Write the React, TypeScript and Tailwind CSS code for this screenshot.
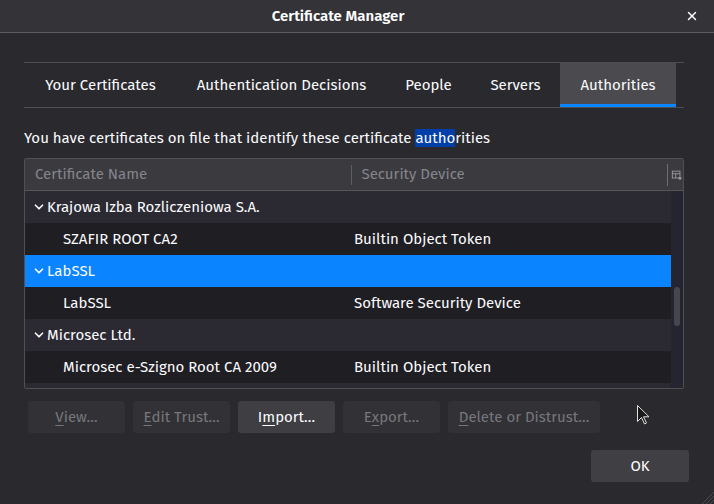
import { ChevronDown, X } from "lucide-react";

const FONT = "font-['Fira_Sans','Noto_Sans','Open_Sans',sans-serif]";

const TABS = [
  { label: "Your Certificates", w: "w-[153px]" },
  { label: "Authentication Decisions", w: "w-[209px]" },
  { label: "People", w: "w-[85px]" },
  { label: "Servers", w: "w-[89px]" },
  { label: "Authorities", w: "w-[116px]", active: true },
];

type Row = { name: string; device?: string; group?: boolean; selected?: boolean };

const ROWS: Row[] = [
  { name: "Krajowa Izba Rozliczeniowa S.A.", group: true },
  { name: "SZAFIR ROOT CA2", device: "Builtin Object Token" },
  { name: "LabSSL", group: true, selected: true },
  { name: "LabSSL", device: "Software Security Device" },
  { name: "Microsec Ltd.", group: true },
  { name: "Microsec e-Szigno Root CA 2009", device: "Builtin Object Token" },
  { name: "", group: true },
];

function TreeRow({ row }: { row: Row }) {
  const bg = row.selected ? "bg-[#0a84ff]" : row.group ? "bg-[#2b2a33]" : "bg-[#1f1e23]";
  return (
    <div className={`flex h-[32px] shrink-0 items-center text-[15px] text-[#fbfbfe] ${bg}`}>
      {row.group ? (
        <div className="flex w-[327px] items-center pl-[7px]">
          {row.name && <ChevronDown className="mr-[1px] h-[14px] w-[14px]" strokeWidth={3} />}
          <span>{row.name}</span>
        </div>
      ) : (
        <div className="w-[327px] pl-[38px]">{row.name}</div>
      )}
      <div className="pl-[2px]">{row.device}</div>
    </div>
  );
}

function Btn({ children, enabled, w }: { children: React.ReactNode; enabled?: boolean; w: string }) {
  return (
    <div
      className={`flex h-[32px] items-center justify-center rounded-[3px] text-[15px] ${w} ${
        enabled ? "bg-[#3e3e43] text-[#fbfbfe]" : "bg-[#313136] text-[#77777d]"
      }`}
    >
      {children}
    </div>
  );
}

export default function App() {
  return (
    <div className={`relative flex h-[504px] w-[714px] flex-col overflow-hidden bg-[#2a2a2e] ${FONT}`}>
      {/* title bar */}
      <div className="relative flex h-[33px] shrink-0 items-center justify-center border-b border-[#5b5b60] bg-[#333338] pr-[38px]">
        <span className="text-[15px] font-semibold text-white">Certificate Manager</span>
        <X className="absolute right-[15px] top-[9px] h-[14px] w-[14px] text-white" strokeWidth={2.5} />
      </div>

      <div className="flex flex-col pl-[24px] pr-[30px]">
        {/* tabs */}
        <div className="mt-[29px] flex h-[46px] border-y border-[#4d4d52]">
          {TABS.map((t) => (
            <div
              key={t.label}
              className={`flex items-center justify-center text-[15px] text-[#fbfbfe] ${t.w} ${
                t.active ? "border-b-[3px] border-[#0a84ff] bg-[#4a4a4f] pt-[3px]" : ""
              }`}
            >
              {t.label}
            </div>
          ))}
        </div>

        <p className="mt-[20px] h-[20px] text-[15px] leading-[20px] text-[#fbfbfe]">
          You have certificates on file that identify these certificate{" "}
          <span className="bg-[#003eaa]">autho</span>rities
        </p>

        {/* tree */}
        <div className="mt-[10px] flex h-[231px] flex-col overflow-hidden rounded-[2px] border border-[#4f4f54]">
          <div className="flex h-[32px] shrink-0 items-center border-b border-[#55555a] bg-[#3a3a3f] text-[15px] text-[#85858c]">
            <div className="w-[326px] pl-[10px]">Certificate Name</div>
            <div className="h-[20px] w-px bg-[#5e5e63]" />
            <div className="w-[316px] pl-[10px]">Security Device</div>
            <div className="h-[22px] w-px bg-[#6e6e73]" />
            <svg viewBox="0 0 14 14" className="ml-[3px] h-[12px] w-[12px]" fill="none" stroke="#a0a0a6" strokeWidth="1">
              <rect x="1.5" y="2.5" width="9" height="8" />
              <path d="M1.5 5.5h9M5.5 5.5v5" />
              <path d="M8 10h5l-2.5 3z" fill="#a0a0a6" stroke="none" />
            </svg>
          </div>
          <div className="flex min-h-0 flex-1">
            <div className="flex min-w-0 flex-1 flex-col">
              {ROWS.map((r, i) => (
                <TreeRow key={i} row={r} />
              ))}
            </div>
            <div className="flex w-[12px] shrink-0 flex-col items-center bg-[#242530] pt-[96px]">
              <div className="h-[39px] w-[6px] rounded-full bg-[#45464f]" />
            </div>
          </div>
        </div>

        {/* action buttons */}
        <div className="mt-[12px] flex gap-[8px] pl-[4px]">
          <Btn w="w-[97px]">
            <span className="underline underline-offset-[3px]">V</span>iew…
          </Btn>
          <Btn w="w-[97px]">
            <span className="underline underline-offset-[3px]">E</span>dit Trust…
          </Btn>
          <Btn w="w-[97px]" enabled>
            I<span className="underline underline-offset-[3px]">m</span>port…
          </Btn>
          <Btn w="w-[97px]">
            E<span className="underline underline-offset-[3px]">x</span>port…
          </Btn>
          <Btn w="w-[152px]">
            <span className="underline underline-offset-[3px]">D</span>elete or Distrust…
          </Btn>
        </div>

        <div className="mt-[17px] flex justify-end">
          <div className="mr-[-5px] flex h-[32px] w-[98px] items-center justify-center rounded-[3px] bg-[#3f3f44] text-[15px] text-[#fbfbfe]">
            OK
          </div>
        </div>
      </div>

      {/* mouse pointer */}
      <svg viewBox="0 0 12 20" className="absolute left-[637px] top-[405px] h-[20px] w-[12px]">
        <path d="M0.5 0.5v16l4-4 3 6.5 2-1-3-6.2h5.5z" fill="#1a1a1a" stroke="#e0e0e0" strokeWidth="1" />
      </svg>

      {/* resize grip */}
      <svg viewBox="0 0 14 14" className="absolute bottom-0 right-0 h-[14px] w-[14px]" stroke="#4a4a52" strokeWidth="1">
        <path d="M14 2L2 14M14 6L6 14M14 10L10 14" />
      </svg>
    </div>
  );
}
